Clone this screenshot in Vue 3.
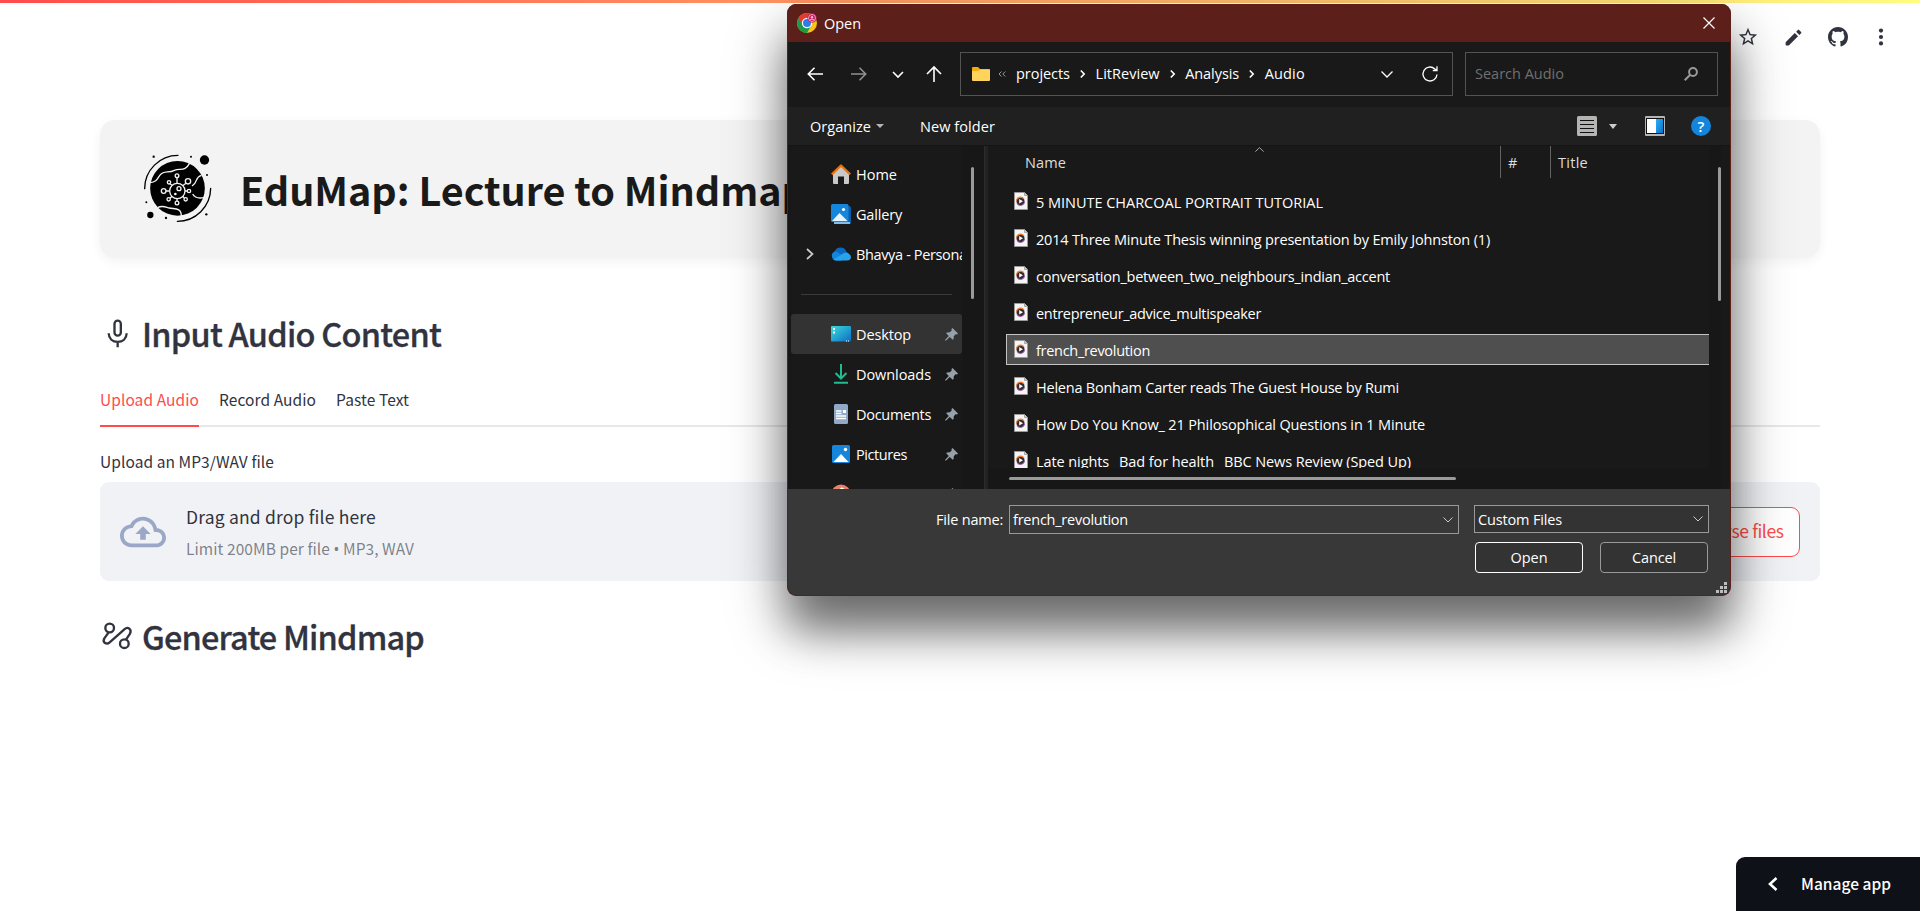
<script setup>
// Adjusts tracking so that a label takes the given width in pixels.
const vFit = {
  mounted(el, { value }) {
    const n = el.textContent.length
    const w = el.getBoundingClientRect().width
    el.style.letterSpacing = `${((value - w) / n).toFixed(4)}px`
  },
}

const files = [
  { name: '5 MINUTE CHARCOAL PORTRAIT TUTORIAL', w: 287 },
  { name: '2014 Three Minute Thesis winning presentation by Emily Johnston (1)', w: 454 },
  { name: 'conversation_between_two_neighbours_indian_accent', w: 354 },
  { name: 'entrepreneur_advice_multispeaker', w: 225 },
  { name: 'french_revolution', w: 114, selected: true },
  { name: 'Helena Bonham Carter reads The Guest House by Rumi', w: 363 },
  { name: 'How Do You Know_ 21 Philosophical Questions in 1 Minute', w: 389 },
  { name: 'Late nights_ Bad for health_ BBC News Review (Sped Up)', w: 375 },
]

const crumbs = [
  { name: 'projects', w: 54 },
  { name: 'LitReview', w: 64 },
  { name: 'Analysis', w: 54 },
  { name: 'Audio', w: 40 },
]

const places = [
  { name: 'Home', icon: 'home', w: 41 },
  { name: 'Gallery', icon: 'gallery', w: 46 },
  { name: 'Bhavya - Personal', icon: 'cloud', w: 114, expand: true },
]

const pinned = [
  { name: 'Desktop', icon: 'desktop', w: 55, active: true },
  { name: 'Downloads', icon: 'downloads', w: 75 },
  { name: 'Documents', icon: 'documents', w: 75 },
  { name: 'Pictures', icon: 'pictures', w: 51 },
  { name: 'Music', icon: 'music', w: 40 },
]
</script>

<template>
  <div class="page">
    <div class="decoration"></div>

    <div class="toolbar">
      <svg class="t-star" viewBox="0 0 24 24"><path d="M22 9.24l-7.19-.62L12 2 9.19 8.63 2 9.24l5.46 4.73L5.82 21 12 17.27 18.18 21l-1.63-7.03L22 9.24zM12 15.4l-3.76 2.27 1-4.28-3.32-2.88 4.38-.38L12 6.1l1.71 4.04 4.38.38-3.32 2.88 1 4.28L12 15.4z" /></svg>
      <svg class="t-pen" viewBox="0 0 24 24"><path d="M3 17.4V20.2q0 .8.8.8h2.8L17.2 10.5l-3.75-3.75L3 17.4zM20.7 7a1 1 0 0 0 0-1.4l-2.3-2.3a1 1 0 0 0-1.4 0l-2 2 3.75 3.75 1.95-2.05z" /></svg>
      <svg class="t-git" viewBox="0 0 16 16"><path d="M8 0C3.58 0 0 3.58 0 8c0 3.54 2.29 6.53 5.47 7.59.4.07.55-.17.55-.38 0-.19-.01-.82-.01-1.49-2.01.37-2.53-.49-2.69-.94-.09-.23-.48-.94-.82-1.13-.28-.15-.68-.52-.01-.53.63-.01 1.08.58 1.23.82.72 1.21 1.87.87 2.33.66.07-.52.28-.87.51-1.07-1.78-.2-3.64-.89-3.64-3.95 0-.87.31-1.59.82-2.15-.08-.2-.36-1.02.08-2.12 0 0 .67-.21 2.2.82.64-.18 1.32-.27 2-.27s1.36.09 2 .27c1.53-1.04 2.2-.82 2.2-.82.44 1.1.16 1.92.08 2.12.51.56.82 1.27.82 2.15 0 3.07-1.87 3.75-3.65 3.95.29.25.54.73.54 1.48 0 1.07-.01 1.93-.01 2.2 0 .21.15.46.55.38A8.01 8.01 0 0 0 16 8c0-4.42-3.58-8-8-8z" /></svg>
      <svg class="t-dots" viewBox="0 0 6 18"><circle cx="3" cy="2.6" r="2.1" /><circle cx="3" cy="9" r="2.1" /><circle cx="3" cy="15.4" r="2.1" /></svg>
    </div>

    <main class="content">
      <header class="banner">
        <svg class="logo" viewBox="150 120 225 225">
          <g fill="none" stroke="#000" stroke-width="4" stroke-linecap="round">
            <path d="M164 236A100 100 0 0 1 264 136" />
            <path d="M362 235A100 100 0 0 1 262 334" />
          </g>
          <circle cx="262.5" cy="235" r="82" />
          <circle cx="343.500" cy="150" r="14" /><circle cx="181" cy="315" r="9.500" />
          <circle cx="191" cy="140" r="3.500" /><circle cx="303" cy="140" r="3" /><circle cx="351" cy="195" r="3" />
          <circle cx="169" cy="277" r="3" /><circle cx="228" cy="324" r="3.500" /><circle cx="349" cy="313" r="3.500" />
          <g fill="none" stroke="#f3f3f3" stroke-width="4">
            <path d="M180 218C204 216 202 202 213 192C224 181 237 190 253 181C272 174 285 186 300 158" />
            <path d="M334 196C313 202 326 216 306 228" />
            <path d="M308 252C316 266 328 266 344 262" />
            <path d="M203 293C216 285 226 291 238 294C251 298 275 290 274 320" />
            <circle cx="262" cy="243" r="23" />
            <circle cx="267" cy="236" r="6" /><circle cx="256" cy="252" r="2" />
            <path d="M261 219V203M261 266V273M238 243H228M285 243H292M246 226L240 221M278 227L289 219M246 259L240 265M278 259L283 264" />
            <circle cx="261" cy="197" r="5.500" /><circle cx="261" cy="279" r="5.500" /><circle cx="221" cy="243" r="7" /><circle cx="297" cy="243" r="5" />
            <circle cx="237" cy="217" r="5" /><circle cx="294" cy="214" r="8" /><circle cx="236" cy="268" r="5" /><circle cx="287" cy="268" r="5" />
          </g>
        </svg>
        <h1><span v-fit="567">EduMap: Lecture to Mindmap</span></h1>
      </header>

      <h2 class="sec first">
        <svg viewBox="30 46 96 102" fill="none" stroke="#31333f" stroke-width="7">
          <rect x="73.500" y="60" width="19" height="45" rx="9.500" /><path d="M56 98C56.500 114 68 123.500 83 123.500S109.500 114 110 98M83 123V140" />
        </svg>
        <span v-fit="299">Input Audio Content</span>
      </h2>

      <nav class="tabs">
        <div class="tab on"><span v-fit="99">Upload Audio</span></div>
        <div class="tab"><span v-fit="97">Record Audio</span></div>
        <div class="tab"><span v-fit="73">Paste Text</span></div>
      </nav>

      <div class="label"><span v-fit="174">Upload an MP3/WAV file</span></div>
      <section class="drop">
        <svg class="up" viewBox="0 0 24 24"><path d="M19.35 10.04C18.67 6.59 15.64 4 12 4 9.11 4 6.6 5.64 5.35 8.04 2.34 8.36 0 10.91 0 14c0 3.31 2.69 6 6 6h13c2.76 0 5-2.24 5-5 0-2.64-2.05-4.78-4.65-4.96zM19 18H6c-2.21 0-4-1.79-4-4 0-2.05 1.53-3.76 3.56-3.97l1.07-.11.5-.95C8.08 7.14 9.94 6 12 6c2.62 0 4.88 1.86 5.39 4.43l.3 1.5 1.53.11c1.56.1 2.78 1.41 2.78 2.96 0 1.65-1.35 3-3 3zM8 13h2.55v3h2.9v-3H16l-4-4z" /></svg>
        <div class="hint">
          <div class="big"><span v-fit="190">Drag and drop file here</span></div>
          <div class="small"><span v-fit="228">Limit 200MB per file <span class="dot">•</span> MP3, WAV</span></div>
        </div>
        <button class="browse"><span v-fit="93">Browse files</span></button>
      </section>

      <h2 class="sec second">
        <svg viewBox="34 452 96 96" fill="none" stroke="#31333f" stroke-width="7" stroke-linejoin="round">
          <circle cx="60" cy="476" r="13" />
          <path d="M57 489L44 507C37 520 51 527 60 519L104 480C115 470 127 480 121 493L109 511" />
          <circle cx="104" cy="523" r="13" />
        </svg>
        <span v-fit="282">Generate Mindmap</span>
      </h2>
    </main>

    <div class="manage">
      <svg viewBox="0 0 10 14"><path d="M8.500 1L2 7l6.500 6" fill="none" stroke="#fff" stroke-width="2.600" /></svg>
      <span v-fit="90">Manage app</span>
    </div>

    <div class="dialog">
      <div class="title">
        <svg class="chrome" viewBox="0 0 20 20">
          <circle cx="10" cy="10" r="10" fill="#fbc116" />
          <path d="M10 10L1.340 5A10 10 0 0 0 10 20L14.300 12.500z" fill="#1e9a4b" />
          <path d="M1.340 5A10 10 0 0 1 18.660 5H10L5.670 12.500z" fill="#e33b2e" />
          <circle cx="10" cy="10" r="5.200" fill="#fff" /><circle cx="10" cy="10" r="4" fill="#2b7de9" />
          <circle cx="15" cy="5" r="4.700" fill="#c2185b" /><circle cx="15" cy="5" r="3.500" fill="none" stroke="#f8bbd9" stroke-width=".8" /><circle cx="15" cy="4.300" r="1.200" fill="#f8bbd9" /><path d="M12.800 7Q15 5.200 17.200 7" stroke="#f8bbd9" fill="none" />
        </svg>
        <span v-fit="37">Open</span>
        <svg class="close" viewBox="0 0 12 12"><path d="M.5.5l11 11M11.500.5l-11 11" stroke="#fff" stroke-width="1.200" /></svg>
      </div>

      <div class="nav">
        <svg class="n-back" viewBox="0 0 16 14"><path d="M16 7H1.500M7.500.8L1.300 7l6.200 6.200" /></svg>
        <svg class="n-fwd" viewBox="0 0 16 14"><path d="M0 7H14.500M8.500.8L14.700 7l-6.200 6.200" /></svg>
        <svg class="n-rec" viewBox="0 0 12 7"><path d="M1 1l5 5 5-5" /></svg>
        <svg class="n-up" viewBox="0 0 16 16"><path d="M8 16V1.500M1 8l7-7 7 7" /></svg>
        <div class="address">
          <svg class="folder" viewBox="0 0 18 14"><path d="M0 1Q0 0 1 0H6L8 2H17Q18 2 18 3V6H0z" fill="#f5a90f" /><path d="M0 4H6L8 2.600H18V13Q18 14 17 14H1Q0 14 0 13z" fill="#ffd35c" /></svg>
          <svg class="dbl" viewBox="0 0 8 6"><path d="M3.500.5L1 3l2.500 2.500M7.300.5L4.800 3l2.500 2.500" /></svg>
          <template v-for="(c, i) in crumbs" :key="c.name">
            <span class="crumb" v-fit="c.w">{{ c.name }}</span>
            <svg v-if="i < 3" class="sep" viewBox="0 0 5 8"><path d="M.8.5L4.200 4 .8 7.500" /></svg>
          </template>
          <svg class="drop-caret" viewBox="0 0 12 7"><path d="M.5.5L6 6 11.500.5" /></svg>
          <svg class="refresh" viewBox="0 0 16 16"><path d="M15 8.500A7 7 0 1 1 12.600 2.700L15 4.500M15 .3V4.500H10.800" /></svg>
        </div>
        <div class="search">
          <span v-fit="89">Search Audio</span>
          <svg viewBox="0 0 14 14"><circle cx="9" cy="5" r="3.900" /><path d="M6 8L.7 13.300" /></svg>
        </div>
      </div>

      <div class="bar">
        <span v-fit="61">Organize</span>
        <i class="tri organize-tri"></i>
        <span class="newf" v-fit="75">New folder</span>
        <svg class="b-list" viewBox="0 0 20 20"><rect width="20" height="20" rx="1.500" fill="#b4b4b2" /><path d="M3 4.500H17M3 8.500H17M3 12.500H17M3 16.500H17" stroke="#111" stroke-width="1" /></svg>
        <i class="tri list-tri"></i>
        <svg class="b-pane" viewBox="0 0 20 20"><defs><linearGradient id="pane" x1="0" y1="0" x2="1" y2="1"><stop stop-color="#2bb0f0" /><stop offset="1" stop-color="#0a74cf" /></linearGradient></defs><rect width="20" height="20" rx="1" fill="#b4b4b2" /><rect x="1" y="2" width="18" height="16" fill="#111" /><rect x="2" y="3" width="9" height="14" fill="#fff" /><rect x="11" y="3" width="7" height="14" fill="url(#pane)" /></svg>
        <div class="help">?</div>
      </div>

      <div class="body">
        <aside class="side">
          <div class="tree">
            <div v-for="p in places" :key="p.name" class="item">
              <svg v-if="p.expand" class="exp" viewBox="0 0 8 12"><path d="M1 1l5.500 5L1 11" /></svg>
              <svg v-if="p.icon === 'home'" class="ico" viewBox="0 0 20 20"><path d="M2 9L10 2l8 7V19Q18 20 17 20H13V12.500H7V20H3Q2 20 2 19z" fill="#c9c9c9" /><path d="M.8 10.300L10 1.500l9.200 8.800" fill="none" stroke="#e8720c" stroke-width="2.300" stroke-linejoin="round" /></svg>
              <svg v-else-if="p.icon === 'gallery'" class="ico" viewBox="0 0 20 20"><rect x="3" y="2" width="17" height="18" rx="1.500" fill="#0a5ba8" /><rect x="3" y="18" width="16" height="2" fill="#7cc0f0" /><rect width="17.500" height="18" rx="1.500" fill="#1686dc" /><path d="M1 17L8.500 9l8 8z" fill="#e8f4fd" /><circle cx="12.500" cy="5.500" r="1.600" fill="#fff" /></svg>
              <svg v-else class="ico" viewBox="0 0 20 20"><path d="M5 15.500A5 5 0 0 1 4 6.700A6.300 6.300 0 0 1 15.500 8A4.500 4.500 0 0 1 16 16z" fill="#0a67c2" /><path d="M1 13Q0 8 5 7.500L16 14 10 16.500H5Q2 16.500 1 13z" fill="#1286dd" /><path d="M2.500 15.500L13 9Q15.500 8 17.500 9.500Q20 11 20 13.500Q19.500 16.500 16 16.500H5Q3.500 16.500 2.500 15.500z" fill="#27a3ec" /></svg>
              <span v-fit="p.w">{{ p.name }}</span>
            </div>
            <div class="rule"></div>
            <div v-for="p in pinned" :key="p.name" class="item" :class="{ active: p.active }">
              <svg v-if="p.icon === 'desktop'" class="ico" viewBox="0 0 20 20"><defs><linearGradient id="desk" x1="0" y1="0" x2="1" y2="1"><stop stop-color="#3bdcdc" /><stop offset="1" stop-color="#0c6cc4" /></linearGradient></defs><rect y="2" width="20" height="15.500" rx="1" fill="url(#desk)" /><path d="M2 4h2v2H2zM2 7.500h2v2H2zM15 16.500h1v1h-1zM17 16.500h1v1h-1z" fill="#fff" /></svg>
              <svg v-else-if="p.icon === 'downloads'" class="ico" viewBox="0 0 20 20" fill="none" stroke="#21bb90" stroke-width="2"><path d="M10 0V14M4.500 9L10 14.500 15.500 9M3 18.700H17" /></svg>
              <svg v-else-if="p.icon === 'documents'" class="ico" viewBox="0 0 20 20"><rect x="3" width="14" height="20" rx="1.500" fill="#8fa9c6" /><path d="M5 7h5.500M5 9.500h5.500M5 12h10M5 14.500h10" stroke="#fff" stroke-width="1.300" /><rect x="12" y="6" width="3" height="3" fill="#fff" /></svg>
              <svg v-else-if="p.icon === 'pictures'" class="ico" viewBox="0 0 20 20"><rect x="1" y="1" width="18" height="18" rx="1.500" fill="#1686dc" /><path d="M2.500 18L10 10l7.500 8z" fill="#fff" /><circle cx="14.500" cy="5.500" r="1.700" fill="#fff" /></svg>
              <svg v-else class="ico" viewBox="0 0 20 20"><circle cx="10" cy="10" r="9.500" fill="#e8806a" /><path d="M10 4V14M10 4l3 1.500" stroke="#fff" stroke-width="1.500" fill="none" /></svg>
              <span v-fit="p.w">{{ p.name }}</span>
              <svg class="pin" viewBox="0 0 13 13"><path d="M7.500 0L13 5.500 12 6.500 10.500 6.300 8.800 8.300 8.600 11 7.700 11.800 4.800 9 .8 12.800 0 12 3.800 8 1.200 5.300 2 4.400 4.800 4.200 6.700 2.500 6.500 1z" /></svg>
            </div>
          </div>
          <div class="vbar"><div class="thumb side-thumb"></div></div>
        </aside>
        <div class="split"></div>
        <section class="list">
          <div class="main">
            <div class="cols">
              <div class="c-name"><span v-fit="41">Name</span><svg class="sort" viewBox="0 0 9 5"><path d="M.4 4.600L4.500.6l4.100 4" /></svg></div>
              <div class="c-num"><span>#</span></div>
              <div class="c-title"><span v-fit="30">Title</span></div>
            </div>
            <div class="rows">
              <div v-for="f in files" :key="f.name" class="row" :class="{ sel: f.selected }">
                <svg viewBox="0 0 14 18"><path d="M.5.5H10.500L13.500 3.500V17.500H.5z" fill="#f4f4f4" stroke="#9a9a9a" /><path d="M10.500.5V3.500H13.500" fill="#ccc" stroke="#9a9a9a" stroke-width=".8" /><circle cx="6.500" cy="9.300" r="4" fill="#332c33" /><path d="M2.300 9.500A4.300 4.300 0 0 1 10 6.800" fill="none" stroke="#ee8138" stroke-width="1.100" /><path d="M2.800 11.500A4.300 4.300 0 0 0 10.700 10" fill="none" stroke="#a65fb5" stroke-width="1" /><path d="M5.200 7L9 9.300 5.200 11.600z" fill="#fff" /></svg>
                <span v-fit="f.w">{{ f.name }}</span>
              </div>
            </div>
            <div class="hbar"><div class="hthumb"></div></div>
          </div>
          <div class="vbar right"><div class="thumb list-thumb"></div></div>
        </section>
      </div>

      <div class="foot">
        <div class="line">
          <span class="flabel" v-fit="67">File name:</span>
          <div class="combo name"><span v-fit="115">french_revolution</span><svg viewBox="0 0 10 6"><path d="M.5.5L5 5 9.500.5" /></svg></div>
          <div class="combo type"><span v-fit="84">Custom Files</span><svg viewBox="0 0 10 6"><path d="M.5.5L5 5 9.500.5" /></svg></div>
        </div>
        <div class="line btns">
          <button class="b primary"><span v-fit="37">Open</span></button>
          <button class="b"><span v-fit="44">Cancel</span></button>
        </div>
        <svg class="grip" viewBox="0 0 11 11"><path d="M8 0h3v3H8zM4 4h3v3H4zM8 4h3v3H8zM0 8h3v3H0zM4 8h3v3H4zM8 8h3v3H8z" /></svg>
      </div>
    </div>
  </div>
</template>

<style>
html,
body {
  margin: 0;
  background: #fff;
}
</style>

<style scoped>
* { box-sizing: border-box; }
svg { display: block; flex: none; }
span { white-space: nowrap; }

.page {
  position: relative;
  width: 1920px;
  height: 911px;
  overflow: hidden;
  background: #fff;
  color: #31333f;
  font-family: "Noto Sans CJK SC", "Source Sans Pro", sans-serif;
}
.decoration { height: 3px; background: linear-gradient(90deg, #ff4b4b, #fffd80); }
.toolbar {
  display: flex;
  align-items: center;
  justify-content: flex-end;
  height: 68px;
  padding-right: 36px;
  fill: #31333f;
}
.t-star { width: 22px; height: 22px; }
.t-pen { width: 21px; height: 21px; margin-left: 24px; }
.t-git { width: 20px; height: 20px; margin-left: 24px; }
.t-dots { width: 6px; height: 18px; margin-left: 30px; }

.content { display: flex; flex-direction: column; padding: 49px 100px 0; }
.banner {
  display: flex;
  align-items: center;
  height: 138px;
  padding: 0 40px 4px;
  border-radius: 15px;
  background: #f3f3f3;
  box-shadow: 0 4px 12px rgba(0, 0, 0, 0.05);
}
.logo { width: 75px; height: 75px; }
h1 { margin: 3px 0 0 25px; font-size: 39.500px; line-height: 60px; font-weight: 700; color: #1a1a1a; }
.sec { display: flex; align-items: center; margin: 0; height: 44px; font-size: 32.500px; line-height: 44px; font-weight: 500; -webkit-text-stroke: 0.3px #31333f; }
.sec span { margin-top: -1px; }
.sec svg { width: 32px; margin-right: 10px; }
.first { margin-top: 53px; }
.first svg { height: 34px; }
.second { margin-top: 33px; }
.second svg { height: 32px; margin-left: 1px; margin-right: 9px; }
.tabs { display: flex; gap: 20px; height: 55px; margin-top: 17px; border-bottom: 2px solid #e8e8ea; font-size: 15.500px; line-height: 20px; }
.tab { height: 55px; padding-top: 17px; }
.tab.on { color: #ff4b4b; border-bottom: 2px solid #ff4b4b; }
.label { height: 20px; margin-top: 24px; font-size: 15.500px; line-height: 20px; }
.drop { display: flex; align-items: center; height: 99px; margin-top: 11px; padding: 0 20px; border-radius: 9px; background: #f0f2f6; }
.up { width: 46px; height: 46px; fill: #9aa7c7; }
.hint { flex: 1; margin-left: 20px; }
.big { font-size: 17.500px; line-height: 28px; margin-top: 1px; }
.small { font-size: 15.500px; line-height: 24px; margin-top: 5px; color: rgba(49, 51, 63, 0.6); }
.dot { font-family: "Noto Sans", sans-serif; }
.browse { width: 127px; height: 50px; padding: 0 0 2px 1px; border: 1px solid #ff4b4b; border-radius: 9px; background: #fff; color: #ff4b4b; font: 400 17.500px "Noto Sans CJK SC", sans-serif; }

.manage {
  position: absolute;
  right: 0;
  bottom: 0;
  display: flex;
  align-items: center;
  width: 184px;
  height: 54px;
  padding: 0 0 1px 32px;
  border-top-left-radius: 9px;
  background: #0e1117;
  color: #fff;
  font-size: 15.500px;
  font-weight: 500;
}
.manage svg { width: 10px; height: 14px; margin-right: 23px; }
.manage span { margin-top: -1px; }

.dialog {
  position: absolute;
  left: 787px;
  top: 4px;
  display: flex;
  flex-direction: column;
  width: 944px;
  height: 592px;
  overflow: hidden;
  border: 1px solid #5c1f19;
  border-top: 0;
  border-radius: 9px;
  background: #191919;
  box-shadow: 0 28px 60px rgba(0, 0, 0, 0.4), 0 36px 40px -2px rgba(0, 0, 0, 0.35);
  color: #fff;
  font-family: "Open Sans", "Noto Sans", sans-serif;
  font-size: 14.500px;
  line-height: 20px;
}
.title { display: flex; align-items: center; height: 38px; padding: 0 15px 0 9px; background: #5c1f19; }
.title span { margin-top: 1px; }
.chrome { width: 20px; height: 20px; margin-right: 7px; }
.close { width: 12px; height: 12px; margin-left: auto; }
.nav { display: flex; align-items: center; height: 65px; padding: 0 12px 1px 19px; fill: none; stroke: #fff; stroke-width: 1.600; }
.nav svg { overflow: visible; }
.n-back { width: 16px; height: 14px; }
.n-fwd { width: 16px; height: 14px; margin-left: 28px; stroke: #909090; }
.n-rec { width: 12px; height: 7px; margin-left: 25px; }
.n-up { width: 16px; height: 16px; margin-left: 22px; }
.address { display: flex; align-items: center; width: 493px; height: 44px; margin-left: 18px; padding: 0 14px 0 11px; border: 1px solid #535353; }
.folder { width: 18px; height: 14px; stroke: none; }
.dbl { width: 8px; height: 6px; margin: 0 10px 0 8px; stroke: #999; stroke-width: 1; }
.sep { width: 5px; height: 8px; margin: 0 10.300px; }
.drop-caret { width: 12px; height: 7px; margin-left: auto; stroke-width: 1.300; }
.refresh { width: 16px; height: 16px; margin-left: 29px; stroke-width: 1.300; }
.search { display: flex; align-items: center; justify-content: space-between; width: 253px; height: 44px; margin-left: 12px; padding: 0 19px 0 9px; border: 1px solid #535353; color: #707070; }
.search svg { width: 14px; height: 14px; stroke: #999; stroke-width: 2; }
.crumb, .search span { stroke: none; }
.bar { display: flex; align-items: center; height: 38px; padding: 0 19px 0 22px; background: #202020; }
.bar span { margin-top: 1px; }
.tri { border: 4px solid transparent; border-top-color: #b5b5b5; border-bottom: 0; }
.organize-tri { margin-left: 5px; }
.bar .newf { margin-left: 36px; }
.b-list { width: 20px; height: 20px; margin-left: auto; }
.list-tri { margin: 0 28px 0 12px; border-width: 5px 4.500px 0; border-top-color: #ccc; }
.b-pane { width: 20px; height: 20px; }
.help { width: 20px; height: 20px; margin-left: 26px; border-radius: 50%; background: #1385dc; font-size: 15px; font-weight: 600; text-align: center; line-height: 20px; }

.body { display: flex; height: 344px; overflow: hidden; border-top: 1px solid #151515; }
.side { display: flex; width: 196px; padding-left: 3px; background: #171717; }
.tree { width: 171px; padding-top: 8px; overflow: hidden; background: #191919; }
.item { position: relative; display: flex; align-items: center; height: 40px; padding-left: 40px; }
.item.active { background: #333; border-radius: 3px; }
.item span { margin-top: 1px; }
.exp { position: absolute; left: 15px; width: 8px; height: 12px; fill: none; stroke: #ccc; stroke-width: 1.700; }
.ico { width: 20px; height: 20px; margin-right: 5px; }
.pin { position: absolute; right: 4px; width: 13px; height: 13px; fill: #97a1a9; }
.rule { height: 1px; margin: 20px 10px 19px; background: #3a3a3a; }
.vbar { padding: 21px 0 0 9px; background: #171717; }
.thumb { width: 3px; border-radius: 2px; background: #9a9a9a; }
.side-thumb { height: 132px; }
.list-thumb { height: 134px; }
.split { width: 4px; background: #232323; border-left: 1px solid #2c2c2c; }
.list { display: flex; flex: 1; }
.main { display: flex; flex-direction: column; width: 721px; }
.cols { display: flex; height: 32px; line-height: 34px; color: #dedede; }
.c-name { position: relative; width: 512px; padding-left: 37px; }
.sort { position: absolute; left: 267px; top: 1px; width: 9px; height: 5px; fill: none; stroke: #aaa; }
.c-num, .c-title { height: 32px; padding-left: 7px; border-left: 1px solid #636363; }
.c-num { width: 50px; }
.rows { height: 290px; padding: 8px 0 0 18px; overflow: hidden; }
.row { display: flex; align-items: center; height: 31px; margin-bottom: 6px; padding-left: 8px; border: 1px solid transparent; border-width: 1px 0; }
.row.sel { padding-left: 7px; border-left: 1px solid #c4c4c4; border-color: #c4c4c4; background: #4f4f4f; }
.row svg { width: 14px; height: 18px; margin: -2px 8px 0 0; }
.row span { margin-top: 2px; }
.hbar { flex: 1; padding: 9px 0 0 21px; background: #171717; }
.hthumb { width: 447px; height: 3px; border-radius: 2px; background: #9a9a9a; }

.foot { position: relative; flex: 1; padding: 16px 21px 0 148px; background: #383838; }
.line { display: flex; align-items: flex-start; }
.flabel { margin: 5px 6px 0 0; }
.combo { display: flex; align-items: center; justify-content: space-between; padding: 1px 5px 0 3px; border: 1px solid #999; }
.combo svg { width: 10px; height: 6px; margin-bottom: 1px; fill: none; stroke: #ccc; }
.name { width: 450px; height: 29px; margin-right: 15px; }
.type { width: 235px; height: 28px; background: #333; }
.btns { justify-content: flex-end; gap: 17px; margin-top: 8px; padding-right: 1px; }
.b { width: 108px; height: 31px; padding: 0; border: 1px solid #999; border-radius: 4px; background: #333; color: #fff; font: 14.500px/20px "Open Sans", sans-serif; }
.primary { border-color: #fff; }
.grip { position: absolute; right: 3px; bottom: 2px; width: 11px; height: 11px; fill: #bdbdbd; }
</style>
